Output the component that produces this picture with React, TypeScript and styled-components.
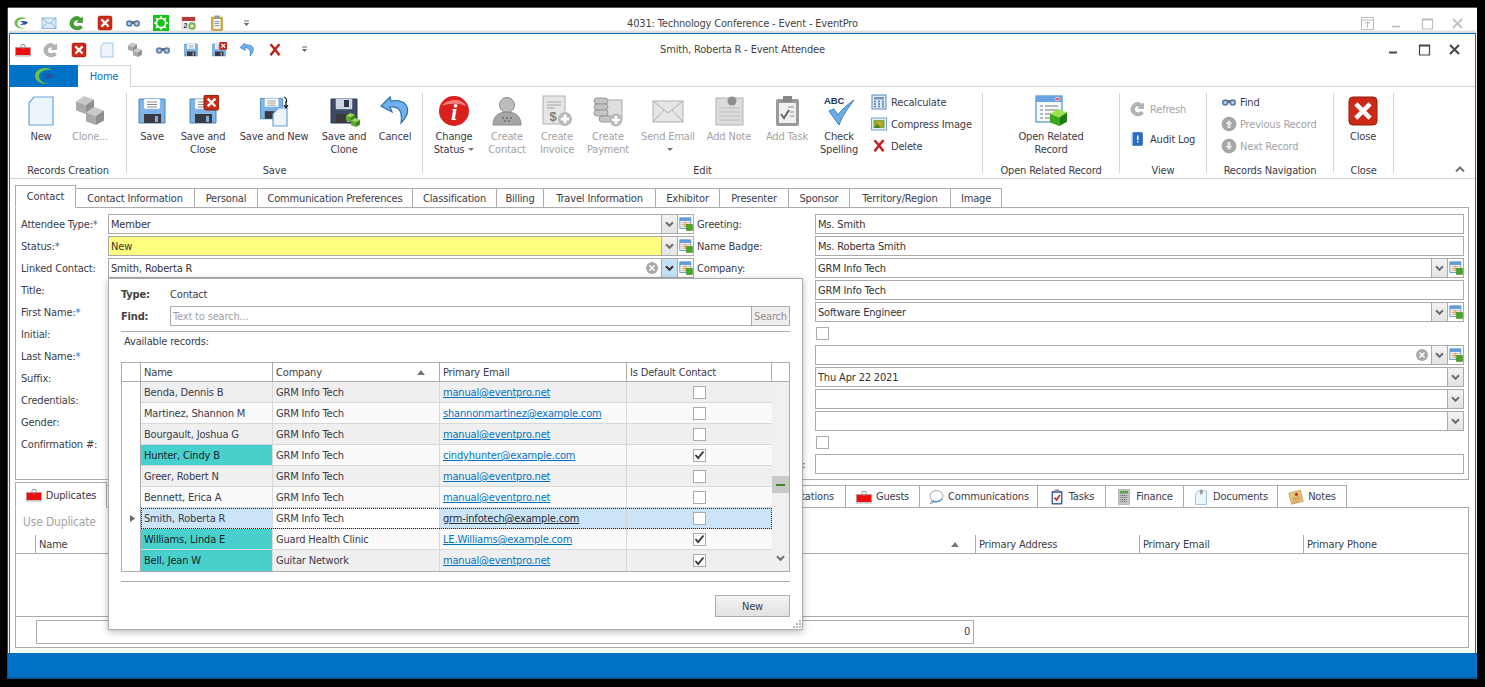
import React from "react";
import styled, { createGlobalStyle } from "styled-components";

const Global = createGlobalStyle`
  html, body { margin: 0; padding: 0; background: #000; overflow: hidden; }
  body { font-family: "DejaVu Sans", "Liberation Sans", sans-serif; font-stretch: condensed; font-size: 11px; letter-spacing: -0.17px; color: #3b3b4a; }
  * { box-sizing: border-box; }
`;

const C = { line: "#ababab", light: "#d6d6d6", blue: "#0072c6", dis: "#a3a3a3", text: "#3b3b4a" };

const Cube = ({ x, y, s, a, b, c }: { x: number; y: number; s: number; a: string; b: string; c: string }) => (
  <g>
    <polygon points={`${x},${y + s * 0.3} ${x + s * 0.45},${y} ${x + s},${y + s * 0.2} ${x + s * 0.55},${y + s * 0.5}`} fill={a} />
    <polygon points={`${x},${y + s * 0.3} ${x + s * 0.55},${y + s * 0.5} ${x + s * 0.55},${y + s} ${x},${y + s * 0.8}`} fill={b} />
    <polygon points={`${x + s * 0.55},${y + s * 0.5} ${x + s},${y + s * 0.2} ${x + s},${y + s * 0.75} ${x + s * 0.55},${y + s}`} fill={c} />
  </g>
);

const Floppy = ({ dark }: { dark?: boolean }) => (
  <g>
    <path d="M3 4h26v24H3z" fill={dark ? "#3c4a68" : "#7fb4e6"} stroke={dark ? "#2c3650" : "#4d84ba"} />
    <rect x="8" y="4" width="16" height="10" fill={dark ? "#cfd6e2" : "#fff"} stroke={dark ? "#cfd6e2" : "#9cc0e2"} strokeWidth=".5" />
    {dark ? <rect x="16" y="5" width="5" height="7" fill="#2c3650" /> : <path d="M11 7h10M11 9.5h10M11 12h10" stroke="#8a8a8a" />}
    <rect x="8" y="19" width="17" height="9" fill="#3a3a40" />
    <rect x="19" y="21" width="3" height="6" fill="#7fb0e0" />
  </g>
);

const RedBox = ({ x = 2, y = 2, s = 28 }: { x?: number; y?: number; s?: number }) => (
  <g>
    <rect x={x} y={y} width={s} height={s} rx={s * 0.14} fill="#cc2a17" stroke="#8e1c0e" strokeWidth={s > 14 ? 1 : 0.6} />
    <path d={`M${x + s * 0.3} ${y + s * 0.3}L${x + s * 0.7} ${y + s * 0.7}M${x + s * 0.7} ${y + s * 0.3}L${x + s * 0.3} ${y + s * 0.7}`} stroke="#fff" strokeWidth={s * 0.16} strokeLinecap="square" />
  </g>
);

const Doc = ({ x = 4, y = 2, w = 24, h = 28 }: { x?: number; y?: number; w?: number; h?: number }) => (
  <path d={`M${x + 5} ${y}H${x + w}V${y + h}H${x}V${y + 6}Z`} fill="#edf5fc" stroke="#6aa3d8" strokeWidth="1.2" />
);

const Plus = ({ x, y, r, c = "#b9b9b9" }: { x: number; y: number; r: number; c?: string }) => (
  <g>
    <circle cx={x} cy={y} r={r} fill={c} />
    <path d={`M${x - r * 0.6} ${y}H${x + r * 0.6}M${x} ${y - r * 0.6}V${y + r * 0.6}`} stroke="#fff" strokeWidth={r * 0.4} />
  </g>
);

const icons: Record<string, React.ReactNode> = {
  logo: (
    <g>
      <path d="M28 7C16 1 4 6 3 15c-1 9 10 14 22 12C14 27 7 21 9 14c2-5 10-8 19-7Z" fill="#6cc04a" />
      <path d="M13 14c5-3 12-2 17 1-3 5-11 6-17 3 4 0 7-1 8-2-2-2-5-2-8-2Z" fill="#2a4fa0" />
    </g>
  ),
  mail: (
    <g>
      <rect x="2" y="6" width="28" height="21" fill="#dcebf8" stroke="#6ea5d8" strokeWidth="1.5" />
      <path d="M2 6l14 12L30 6M2 27l10-12M30 27L20 15" fill="none" stroke="#6ea5d8" strokeWidth="1.5" />
    </g>
  ),
  refreshGreen: (
    <path d="M27 4v11H16l4-4c-5-3-11 0-11 6 0 6 8 9 13 4l5 4c-8 9-25 4-25-8C2 5 16-2 24 7Z" fill="#3fa52c" stroke="#1d6b16" />
  ),
  refreshGray: (
    <path d="M27 4v11H16l4-4c-5-3-11 0-11 6 0 6 8 9 13 4l5 4c-8 9-25 4-25-8C2 5 16-2 24 7Z" fill="#b5b5b5" stroke="#8f8f8f" />
  ),
  redX: <RedBox />,
  bin: (
    <g>
      <circle cx="8.5" cy="17" r="6.5" fill="#5c7ea8" />
      <circle cx="23.5" cy="17" r="6.5" fill="#5c7ea8" />
      <circle cx="8.5" cy="17" r="3.2" fill="#b8d0ea" />
      <circle cx="23.5" cy="17" r="3.2" fill="#b8d0ea" />
      <rect x="13" y="12" width="6" height="6" fill="#6d6d76" />
    </g>
  ),
  gear: (
    <g>
      <rect x="0" y="0" width="32" height="32" fill="#12c312" />
      <circle cx="16" cy="16" r="11" fill="#fff" />
      <circle cx="16" cy="16" r="7.5" fill="#12c312" />
      <path d="M16 2v5M16 25v5M2 16h5M25 16h5M6 6l4 4M22 22l4 4M26 6l-4 4M6 26l4-4" stroke="#fff" strokeWidth="3" />
    </g>
  ),
  cal: (
    <g>
      <rect x="2" y="4" width="26" height="24" fill="#f2f2f2" stroke="#b5b5b5" />
      <rect x="2" y="4" width="26" height="8" fill="#b23a3a" />
      <text x="5" y="25" fontFamily="Liberation Sans" fontWeight="700" fontSize="14" fill="#333">2</text>
      <circle cx="22" cy="22" r="7" fill="#8fbf5a" stroke="#5d8c33" />
      <circle cx="22" cy="22" r="3" fill="#eef6e2" />
    </g>
  ),
  clipYellow: (
    <g>
      <rect x="5" y="4" width="22" height="27" rx="2" fill="#d8a83a" stroke="#a77c1e" />
      <rect x="9" y="8" width="14" height="20" fill="#f2f6fb" />
      <rect x="11" y="1" width="10" height="6" fill="#8b9aa8" />
      <path d="M11 13h10M11 17h10M11 21h10" stroke="#5b85b5" strokeWidth="1.5" />
    </g>
  ),
  badge: (
    <g>
      <rect x="1" y="11" width="30" height="17" fill="#ee0e0e" stroke="#9a9a9a" />
      <rect x="12" y="5" width="8" height="7" rx="2" fill="none" stroke="#8e8e8e" strokeWidth="2" />
      <rect x="1" y="26" width="30" height="3" fill="#c9c9c9" />
    </g>
  ),
  newDoc: <Doc />,
  clone: (
    <g>
      <Cube x={2} y={1} s={18} a="#c9c9c9" b="#a9a9a9" c="#8f8f8f" />
      <Cube x={12} y={12} s={18} a="#c9c9c9" b="#a9a9a9" c="#8f8f8f" />
    </g>
  ),
  save: <Floppy />,
  saveX: (
    <g>
      <Floppy />
      <RedBox x={17} y={0} s={15} />
    </g>
  ),
  saveNew: (
    <g>
      <g transform="scale(.85)"><Floppy /></g>
      <Doc x={15} y={13} w={14} h={18} />
      <path d="M26 2c3 1 3 4 2 6M28 6v6M26 10l2 3 2-3" fill="none" stroke="#111" strokeWidth="1.2" />
    </g>
  ),
  saveClone: (
    <g>
      <Floppy dark />
      <Cube x={18} y={18} s={9} a="#9ed65c" b="#5cab2a" c="#3e8a1b" />
      <Cube x={23} y={23} s={9} a="#9ed65c" b="#5cab2a" c="#3e8a1b" />
    </g>
  ),
  undo: (
    <path d="M11 2L2 11l11 6-2-5c8-1 13 3 11 16 7-7 8-13 5-18-3-4-9-5-15-4Z" fill="#6fb1ec" stroke="#2a6db5" strokeWidth="1.2" />
  ),
  bigX: <path d="M5 6l4-3 7 8 7-8 4 3-8 9 8 10-4 3-7-9-7 9-4-3 8-10Z" fill="#c1201c" />,
  info: (
    <g>
      <circle cx="16" cy="16" r="15" fill="#d9201e" />
      <path d="M4 11c4-7 20-9 24 0-6-3-18-3-24 0Z" fill="#f47f7d" />
      <text x="16" y="25" textAnchor="middle" fontFamily="Liberation Serif" fontStyle="italic" fontWeight="700" fontSize="23" fill="#fff">i</text>
    </g>
  ),
  person: (
    <g>
      <circle cx="16" cy="10" r="7.5" fill="#bcbcbc" stroke="#8a8a8a" />
      <path d="M2 30c0-9 6-13 14-13s14 4 14 13Z" fill="#a6a6a6" stroke="#8a8a8a" />
      <path d="M11 23h2M15 23h2M19 23h2M13 26h2M17 26h2" stroke="#6d6d6d" strokeWidth="1.6" />
    </g>
  ),
  invoice: (
    <g>
      <rect x="2" y="1" width="22" height="28" fill="#e6e6e6" stroke="#b2b2b2" />
      <path d="M6 7h14M6 10h14M6 13h8" stroke="#a8a8a8" />
      <text x="12" y="26" textAnchor="middle" fontFamily="Liberation Sans" fontWeight="700" fontSize="13" fill="#7d7d7d">$</text>
      <Plus x={24} y={24} r={7} />
    </g>
  ),
  payment: (
    <g>
      <rect x="12" y="5" width="18" height="18" fill="#dedede" stroke="#aaa" />
      <rect x="2" y="3" width="14" height="6" rx="3" fill="#c4c4c4" stroke="#989898" />
      <rect x="2" y="9" width="14" height="6" rx="3" fill="#c4c4c4" stroke="#989898" />
      <rect x="2" y="15" width="14" height="6" rx="3" fill="#c4c4c4" stroke="#989898" />
      <rect x="7" y="21" width="14" height="6" rx="3" fill="#c4c4c4" stroke="#989898" />
      <Plus x={24} y={25} r={6.5} />
    </g>
  ),
  envelope: (
    <g>
      <rect x="1" y="6" width="30" height="21" fill="#e6e6e6" stroke="#b0b0b0" />
      <path d="M1 6l15 12L31 6M1 27l11-12M31 27L20 15" fill="none" stroke="#b0b0b0" />
    </g>
  ),
  note: (
    <g>
      <rect x="3" y="3" width="27" height="27" fill="#dcdcdc" stroke="#b4b4b4" />
      <path d="M6 13h21M6 17h21M6 21h21M6 25h21" stroke="#bdbdbd" />
      <circle cx="19" cy="6" r="4.5" fill="#8d8d8d" />
    </g>
  ),
  task: (
    <g>
      <rect x="5" y="4" width="23" height="27" rx="2" fill="#9a9a9a" />
      <rect x="8" y="8" width="17" height="20" fill="#f0f0f0" />
      <rect x="12" y="1" width="9" height="6" fill="#888" />
      <path d="M10 19l3 4 5-8" fill="none" stroke="#666" strokeWidth="2" />
      <path d="M17 12h6M19 17h4M19 21h4" stroke="#8a8a8a" />
    </g>
  ),
  spell: (
    <g>
      <text x="1" y="9" fontFamily="Liberation Sans" fontWeight="700" fontSize="9.5" fill="#27355c">ABC</text>
      <path d="M6 16l5-2 4 6C19 14 25 9 31 5c-5 7-11 14-15 25Z" fill="#69aee8" stroke="#3b7dc0" />
    </g>
  ),
  recalc: (
    <g>
      <rect x="2" y="2" width="28" height="28" fill="#dfeaf6" stroke="#5f87b4" strokeWidth="2" />
      <rect x="6" y="6" width="20" height="5" fill="#6f98c9" />
      <path d="M6 15h4M14 15h4M22 15h4M6 20h4M14 20h4M22 20h4M6 25h4M14 25h4M22 25h4" stroke="#4f7bb0" strokeWidth="3" />
    </g>
  ),
  compress: (
    <g>
      <rect x="1" y="4" width="30" height="24" fill="#dfeaf6" stroke="#7aa0c8" strokeWidth="2" />
      <rect x="5" y="8" width="22" height="16" fill="#7fae3f" />
      <circle cx="17" cy="15" r="5" fill="#e09a2a" />
      <path d="M5 24l8-8 6 8Z" fill="#4e7d24" />
    </g>
  ),
  related: (
    <g>
      <rect x="1" y="1" width="26" height="26" fill="#f7fafd" stroke="#4f8fd0" strokeWidth="1.2" />
      <rect x="1" y="1" width="26" height="6" fill="#69a5e2" />
      <rect x="21" y="2.5" width="3" height="3" fill="#e33" stroke="#fff" strokeWidth=".6" />
      <path d="M5 11h3M10 11h13M5 15h3M10 15h13M5 19h3M10 19h9M5 23h3M10 23h7" stroke="#777" />
      <Cube x={15} y={14} s={17} a="#9ee04c" b="#3aa71c" c="#1f7c10" />
    </g>
  ),
  audit: (
    <g>
      <rect x="5" y="3" width="20" height="26" rx="2" fill="#2a6ec4" stroke="#164e96" />
      <rect x="3" y="5" width="3" height="22" fill="#9cc3ec" />
      <rect x="14" y="9" width="3" height="9" fill="#fff" />
      <rect x="14" y="20" width="3" height="3" fill="#fff" />
    </g>
  ),
  prev: (
    <g>
      <circle cx="16" cy="16" r="14" fill="#a6a6a6" stroke="#8c8c8c" />
      <path d="M16 8l7 8h-4v8h-6v-8H9Z" fill="#e8e8e8" />
    </g>
  ),
  next: (
    <g>
      <circle cx="16" cy="16" r="14" fill="#a6a6a6" stroke="#8c8c8c" />
      <path d="M16 24l7-8h-4V8h-6v8H9Z" fill="#e8e8e8" />
    </g>
  ),
  bubble: (
    <g>
      <ellipse cx="17" cy="14" rx="13" ry="11" fill="#fff" stroke="#8a8a8a" strokeWidth="1.5" />
      <path d="M8 22L4 30l10-5" fill="#fff" stroke="#8a8a8a" strokeWidth="1.5" />
      <path d="M8 24c6 3 16 2 21-5" fill="none" stroke="#3e8ad6" strokeWidth="2.5" />
    </g>
  ),
  tasks: (
    <g>
      <rect x="5" y="4" width="22" height="27" rx="2" fill="#3f69a3" />
      <rect x="8" y="8" width="16" height="20" fill="#f6f6f6" />
      <rect x="11" y="1" width="10" height="6" fill="#8a8a8a" />
      <path d="M11 17l4 5 7-10" fill="none" stroke="#c1201c" strokeWidth="3" />
    </g>
  ),
  calc: (
    <g>
      <rect x="5" y="1" width="22" height="30" fill="#c4c4c4" stroke="#8c8c8c" />
      <rect x="8" y="4" width="16" height="5" fill="#58a34a" />
      <path d="M9 13h14M9 17h14M9 21h14M9 25h14" stroke="#666" strokeWidth="2" strokeDasharray="2 1.5" />
    </g>
  ),
  docs: (
    <g>
      <Doc x={5} y={4} w={22} h={27} />
      <path d="M16 2v9" stroke="#555" strokeWidth="2" />
      <path d="M14 4c0-3 5-3 5 0v6" fill="none" stroke="#777" />
    </g>
  ),
  notes: (
    <g transform="rotate(-14 16 16)">
      <rect x="4" y="5" width="24" height="23" fill="#e9c27a" stroke="#b17f2d" />
      <path d="M8 17h16M8 21h16M8 25h12" stroke="#9d7a3a" />
      <circle cx="18" cy="11" r="3" fill="#c1201c" />
    </g>
  ),
  table: (
    <g>
      <rect x="2" y="2" width="25" height="24" fill="#f2f7fc" stroke="#4f8ccb" strokeWidth="2" />
      <rect x="2" y="2" width="25" height="7" fill="#5f9bd8" />
      <path d="M6 13h18M6 17h18M6 21h12M14 10v14" stroke="#e2852c" strokeWidth="1.5" />
      <rect x="17" y="17" width="14" height="14" fill="#46a81f" stroke="#2d7a10" />
    </g>
  ),
};

const Icon = ({ n, s = 16 }: { n: string; s?: number }) => (
  <svg width={s} height={s} viewBox="0 0 32 32" style={{ flex: "none", display: "block" }}>
    {icons[n]}
  </svg>
);

const Chevron = ({ c = "#6f6f6f" }: { c?: string }) => (
  <svg width="9" height="7" viewBox="0 0 9 7"><path d="M1 1.2l3.5 3.6L8 1.2" fill="none" stroke={c} strokeWidth="2" /></svg>
);

const Dropper = () => (
  <svg width="7" height="7" viewBox="0 0 7 7"><path d="M1 1h5" stroke="#666" /><path d="M.8 3h5.4L3.5 6Z" fill="#666" /></svg>
);

const Frame = styled.div`
  margin: 8px 8px 0;
  width: 1469px;
  height: 671px;
  background: #fff;
  display: flex;
  flex-direction: column;
  box-shadow: 0 -1px 0 #555, -1px 0 0 #444;
`;

const OuterBar = styled.div`
  height: 25px;
  flex: none;
  display: flex;
  align-items: center;
  padding: 5px 0 0 5px;
  position: relative;
`;

const IconRow = styled.div`
  display: flex;
  align-items: center;
  gap: 12px;
`;

const QatMenu = styled.div<{ $ml: number }>`
  margin-left: ${(p) => p.$ml}px;
  display: flex;
`;

const WindowTitle = styled.div`
  position: absolute;
  left: 0;
  right: 0;
  text-align: center;
  color: #444;
  pointer-events: none;
`;

const WinButtons = styled.div<{ $mr: number }>`
  margin-left: auto;
  margin-right: ${(p) => p.$mr}px;
  display: flex;
  align-items: center;
  gap: 17px;
`;

const Inner = styled.div`
  height: 620px;
  flex: none;
  margin: 0 1px;
  border: 1px solid ${C.blue};
  border-bottom: 0;
  box-shadow: 0 -2px 2px rgba(0,0,0,.18);
  display: flex;
  flex-direction: column;
  background: #fff;
`;

const InnerBar = styled(OuterBar)`
  height: 31px;
  padding: 0 0 0 5px;
`;

const MenuTabs = styled.div`
  height: 22px;
  flex: none;
  display: flex;
  border-bottom: 1px solid ${C.light};
`;

const AppTab = styled.div`
  width: 68px;
  height: 22px;
  background: ${C.blue};
  display: flex;
  align-items: center;
  justify-content: center;
`;

const HomeTab = styled.div`
  width: 53px;
  height: 22px;
  background: #fff;
  border: 1px solid ${C.light};
  border-width: 1px 1px 0 0;
  color: ${C.blue};
  display: flex;
  align-items: center;
  justify-content: center;
`;

const Ribbon = styled.div`
  height: 92px;
  flex: none;
  display: flex;
  padding-top: 6px;
  border-bottom: 1px solid ${C.light};
`;

const Group = styled.div<{ $w: number }>`
  width: ${(p) => p.$w}px;
  height: 80px;
  flex: none;
  border-right: 1px solid ${C.light};
  display: flex;
  flex-direction: column;
`;

const GroupBody = styled.div<{ $pl?: number }>`
  height: 70px;
  flex: none;
  display: flex;
  padding-left: ${(p) => p.$pl ?? 0}px;
`;

const GroupLabel = styled.div`
  height: 14px;
  margin: 1px 0 -5px;
  line-height: 14px;
  text-align: center;
  white-space: nowrap;
`;

const BigButton = styled.div<{ $w: number; $off?: boolean }>`
  width: ${(p) => p.$w}px;
  flex: none;
  display: flex;
  flex-direction: column;
  align-items: center;
  padding-top: 2px;
  color: ${(p) => (p.$off ? C.dis : C.text)};
  line-height: 13px;
  text-align: center;
  white-space: nowrap;
`;

const BigLabel = styled.div`
  margin-top: 3px;
`;

const SmallCol = styled.div<{ $ml: number; $pt?: number; $gap?: number }>`
  margin-left: ${(p) => p.$ml}px;
  padding-top: ${(p) => p.$pt ?? 0}px;
  display: flex;
  flex-direction: column;
  gap: ${(p) => p.$gap ?? 4}px;
`;

const SmallItem = styled.div<{ $off?: boolean; $ig?: number }>`
  height: 18px;
  display: flex;
  align-items: center;
  gap: ${(p) => p.$ig ?? 4}px;
  color: ${(p) => (p.$off ? C.dis : C.text)};
  white-space: nowrap;
`;

const Caret = styled.span`
  display: inline-block;
  margin-left: 4px;
  vertical-align: 2px;
  border: 3px solid transparent;
  border-top-color: #777;
  border-bottom: 0;
`;

const CollapseBtn = styled.div`
  margin: 70px 0 0 auto;
  padding-right: 10px;
`;

const Content = styled.div`
  flex: 1;
  padding: 6px 6px 0 5px;
  display: flex;
  flex-direction: column;
  position: relative;
`;

const Strip = styled.div<{ $h: number }>`
  height: ${(p) => p.$h}px;
  flex: none;
  display: flex;
  align-items: flex-end;
  position: relative;
  z-index: 1;
  margin-bottom: -1px;
`;

const Tab = styled.div<{ $w: number; $active?: boolean; $right?: boolean; $h: number }>`
  width: ${(p) => p.$w}px;
  height: ${(p) => (p.$active ? p.$h + 1 : p.$h - 2)}px;
  flex: none;
  display: flex;
  align-items: center;
  justify-content: ${(p) => (p.$right ? "flex-end" : "center")};
  gap: 4px;
  background: #fff;
  border: 1px solid ${C.line};
  border-left-width: ${(p) => (p.$active ? 1 : 0)}px;
  border-bottom-color: ${(p) => (p.$active ? "#fff" : C.line)};
  padding: ${(p) => (p.$right ? "0 11px 0 0" : "0")};
  white-space: nowrap;
  color: ${C.text};
`;

const Panel = styled.div<{ $h: number }>`
  height: ${(p) => p.$h}px;
  flex: none;
  border: 1px solid ${C.line};
`;

const FormPanel = styled(Panel)`
  padding: 6px 0 0 5px;
  display: flex;
  gap: 3px;
`;

const FormCol = styled.div`
  display: flex;
  flex-direction: column;
`;

const Row = styled.div<{ $h?: number; $lw: number; $cw: number }>`
  height: ${(p) => p.$h ?? 22}px;
  display: grid;
  grid-template-columns: ${(p) => p.$lw}px ${(p) => p.$cw}px;
  align-items: start;
`;

const Label = styled.div`
  height: 20px;
  line-height: 21px;
  white-space: nowrap;
`;

const Star = styled.span`
  color: #2f6fb0;
`;

const Control = styled.div`
  height: 20px;
  display: flex;
  border: 1px solid ${C.line};
  background: #fff;
`;

const ControlText = styled.div<{ $bg?: string }>`
  flex: 1;
  min-width: 0;
  padding: 1px 2px 0;
  line-height: 17px;
  background: ${(p) => p.$bg ?? "#fff"};
  display: flex;
  align-items: center;
  justify-content: space-between;
  white-space: nowrap;
  color: #333;
`;

const ClearMark = styled.div`
  width: 14px;
  height: 14px;
  display: flex;
  margin-top: -1px;
`;

const DropBtn = styled.div<{ $on?: boolean }>`
  width: 16px;
  height: 18px;
  flex: none;
  display: flex;
  align-items: center;
  justify-content: center;
  border-left: 1px solid ${C.line};
  background: ${(p) => (p.$on ? "#c6e1f6" : "linear-gradient(#f3f3f3,#e3e3e3)")};
`;

const SideBtn = styled.div`
  width: 16px;
  height: 18px;
  flex: none;
  display: flex;
  align-items: center;
  justify-content: center;
  border-left: 1px solid ${C.line};
`;

const CheckBox = styled.div`
  width: 13px;
  height: 13px;
  border: 1px solid ${C.line};
  background: #fff;
  display: flex;
  align-items: center;
  justify-content: center;
`;

const CheckRow = styled.div`
  height: 19px;
  display: flex;
  align-items: center;
  padding: 0 0 0 1px;
`;

const GapV = styled.div<{ $h: number }>`
  height: ${(p) => p.$h}px;
  flex: none;
`;

const BottomPanel = styled(Panel)`
  display: flex;
  flex-direction: column;
`;

const UseDup = styled.div`
  height: 27px;
  padding: 7px 0 0 7px;
  font-size: 12px;
  color: ${C.dis};
`;

const DupHead = styled.div`
  height: 19px;
  flex: none;
  display: flex;
  align-items: stretch;
  border-bottom: 1px solid ${C.line};
  padding-left: 19px;
`;

const DupCol = styled.div<{ $w: number }>`
  width: ${(p) => p.$w}px;
  flex: none;
  border-left: 1px solid ${C.line};
  padding: 1px 0 0 3px;
  line-height: 17px;
  display: flex;
  align-items: center;
  justify-content: space-between;
`;

const DupBody = styled.div`
  flex: 1;
`;

const DupFoot = styled.div`
  height: 31px;
  flex: none;
  border-top: 1px solid ${C.line};
  padding: 3px 0 0 20px;
`;

const FootBox = styled.div`
  width: 938px;
  height: 24px;
  border: 1px solid ${C.line};
  text-align: right;
  padding-right: 3px;
  line-height: 22px;
`;

const Popup = styled.div`
  position: absolute;
  left: 98px;
  top: 99px;
  width: 695px;
  height: 352px;
  z-index: 5;
  background: #fff;
  border: 1px solid ${C.line};
  box-shadow: 0 2px 7px rgba(0,0,0,.28);
  padding: 4px 12px 0 12px;
  display: flex;
  flex-direction: column;
`;

const PopRow = styled.div`
  height: 22px;
  flex: none;
  display: grid;
  grid-template-columns: 49px 1fr;
  align-items: center;
`;

const PopLabel = styled.div`
  font-weight: 700;
  color: #444;
`;

const SearchBox = styled.div`
  height: 20px;
  width: 620px;
  border: 1px solid ${C.line};
  display: flex;
  justify-content: space-between;
  align-items: stretch;
  color: #a0a0a0;
  line-height: 19px;
  padding-left: 2px;
`;

const SearchBtn = styled.div`
  width: 38px;
  flex: none;
  border-left: 1px solid ${C.line};
  background: #efefef;
  color: #8f8f8f;
  text-align: center;
`;

const Sep = styled.div<{ $mt?: number }>`
  height: 1px;
  width: 669px;
  flex: none;
  margin-top: ${(p) => p.$mt ?? 0}px;
  background: ${C.line};
`;

const Avail = styled.div`
  height: 30px;
  flex: none;
  padding: 3px 0 0 3px;
  line-height: 14px;
`;

const GridBox = styled.div`
  width: 669px;
  height: 210px;
  flex: none;
  border: 1px solid ${C.line};
  display: flex;
  flex-direction: column;
`;

const COLS = "19px 132px 167px 187px 145px 17px";

const GridHead = styled.div`
  height: 19px;
  flex: none;
  display: grid;
  grid-template-columns: ${COLS};
  border-bottom: 1px solid ${C.line};
`;

const HeadCell = styled.div`
  border-right: 1px solid ${C.line};
  padding: 1px 3px 0;
  line-height: 17px;
  display: flex;
  align-items: center;
  justify-content: space-between;
  &:last-child { border-right: 0; }
`;

const SortUp = styled.span<{ $mr: number }>`
  width: 0;
  height: 0;
  margin-right: ${(p) => p.$mr}px;
  border: 4px solid transparent;
  border-top: 0;
  border-bottom: 5px solid #777;
`;

const GridBody = styled.div`
  flex: 1;
  display: grid;
  grid-template-columns: 19px 631px 17px;
  min-height: 0;
`;

const Indicator = styled.div`
  display: flex;
  flex-direction: column;
  border-right: 1px solid ${C.line};
`;

const IndCell = styled.div`
  height: 21px;
  display: flex;
  align-items: center;
  padding: 0 0 0 8px;
`;

const Rows = styled.div`
  display: flex;
  flex-direction: column;
`;

const GridRow = styled.div<{ $alt: boolean; $sel?: boolean }>`
  height: 21px;
  flex: none;
  display: grid;
  grid-template-columns: 132px 167px 187px 145px;
  background: ${(p) => (p.$sel ? "#fff" : p.$alt ? "#efefef" : "#fafafa")};
  border-bottom: 1px solid #d8d8d8;
  outline: ${(p) => (p.$sel ? "1px dotted #222" : "none")};
  outline-offset: -1px;
  &:last-child { border-bottom: 0; }
`;

const Cell = styled.div<{ $bg?: string; $dark?: boolean }>`
  padding: 1px 3px 0;
  line-height: 20px;
  white-space: nowrap;
  overflow: hidden;
  border-right: 1px solid #d8d8d8;
  background: ${(p) => p.$bg ?? "transparent"};
  color: ${(p) => (p.$dark ? "#1c1c28" : C.text)};
`;

const MailLink = styled.span<{ $sel?: boolean }>`
  color: ${(p) => (p.$sel ? "#2a2a33" : "#0072c6")};
  text-decoration: underline;
`;

const CheckCell = styled.div<{ $bg?: string }>`
  display: flex;
  align-items: center;
  justify-content: center;
  background: ${(p) => p.$bg ?? "transparent"};
`;

const Scroll = styled.div`
  display: flex;
  flex-direction: column;
  align-items: center;
  background: #f0f0f0;
`;

const Thumb = styled.div`
  width: 17px;
  height: 17px;
  margin-top: 94px;
  background: #c9c9c9;
  display: flex;
  align-items: center;
  justify-content: center;
`;

const ThumbMark = styled.div`
  width: 9px;
  height: 2px;
  background: #3b8a24;
`;

const ScrollDown = styled.div`
  margin-top: auto;
  padding-bottom: 6px;
`;

const PopFoot = styled.div`
  display: flex;
  justify-content: flex-end;
  padding-top: 13px;
  width: 669px;
`;

const NewBtn = styled.div`
  width: 75px;
  height: 22px;
  border: 1px solid ${C.line};
  background: linear-gradient(#f3f3f3,#e2e2e2);
  text-align: center;
  line-height: 21px;
`;

const Grip = styled.svg`
  position: absolute;
  right: 1px;
  bottom: 1px;
`;

const Status = styled.div`
  flex: 1;
  background: ${C.blue};
  border-bottom: 2px solid #005a9e;
`;

const formTabs: [string, number][] = [
  ["Contact", 61], ["Contact Information", 119], ["Personal", 63], ["Communication Preferences", 155],
  ["Classification", 84], ["Billing", 47], ["Travel Information", 112], ["Exhibitor", 64],
  ["Presenter", 69], ["Sponsor", 61], ["Territory/Region", 101], ["Image", 51],
];

const bottomTabs: [string, number, string?][] = [
  ["Duplicates", 92, "badge"], ["Presentations", 739], ["Guests", 74, "badge"], ["Communications", 118, "bubble"],
  ["Tasks", 68, "tasks"], ["Finance", 78, "calc"], ["Documents", 94, "docs"], ["Notes", 69, "notes"],
];

type L = { t: string; star?: boolean; kind?: string };
const leftRows: L[] = [
  { t: "Attendee Type:", star: true, kind: "Member" },
  { t: "Status:", star: true, kind: "New" },
  { t: "Linked Contact:", kind: "Smith, Roberta R" },
  { t: "Title:" }, { t: "First Name:", star: true }, { t: "Initial:" }, { t: "Last Name:", star: true },
  { t: "Suffix:" }, { t: "Credentials:" }, { t: "Gender:" }, { t: "Confirmation #:" },
];

const records = [
  ["Benda, Dennis B", "GRM Info Tech", "manual@eventpro.net", 0, 0],
  ["Martinez, Shannon M", "GRM Info Tech", "shannonmartinez@example.com", 0, 0],
  ["Bourgault, Joshua G", "GRM Info Tech", "manual@eventpro.net", 0, 0],
  ["Hunter, Cindy B", "GRM Info Tech", "cindyhunter@example.com", 1, 1],
  ["Greer, Robert N", "GRM Info Tech", "manual@eventpro.net", 0, 0],
  ["Bennett, Erica A", "GRM Info Tech", "manual@eventpro.net", 0, 0],
  ["Smith, Roberta R", "GRM Info Tech", "grm-infotech@example.com", 0, 0],
  ["Williams, Linda E", "Guard Health Clinic", "LE.Williams@example.com", 1, 1],
  ["Bell, Jean W", "Guitar Network", "manual@eventpro.net", 1, 1],
] as const;

const Tick = () => (
  <svg width="11" height="10" viewBox="0 0 11 10"><path d="M1.5 5l2.6 3L9.5 1.5" fill="none" stroke="#333" strokeWidth="1.8" /></svg>
);

const Clear = () => (
  <ClearMark>
    <svg width="14" height="14" viewBox="0 0 14 14">
      <circle cx="7" cy="7" r="6" fill="#a9a9a9" />
      <path d="M4.5 4.5l5 5M9.5 4.5l-5 5" stroke="#fff" strokeWidth="1.5" />
    </svg>
  </ClearMark>
);

const Side = () => (
  <SideBtn><Icon n="table" s={14} /></SideBtn>
);

const WinGlyph = ({ k, c }: { k: string; c: string }) => (
  <svg width="13" height="13" viewBox="0 0 13 13">
    {k === "pin" && <path d="M.5.5h12v12H.5zM.5 3h12M6.5 11V5M4 7l2.5-2.5L9 7" fill="none" stroke={c} />}
    {k === "min" && <path d="M1 9.5h8" stroke={c} strokeWidth="2" />}
    {k === "max" && <path d="M1.5 2h10v10h-10zM1.5 3h10" fill="none" stroke={c} strokeWidth="1.2" />}
    {k === "close" && <path d="M2 2l9 9M11 2l-9 9" stroke={c} strokeWidth="2" />}
  </svg>
);

const Big = ({ n, w, label, off, caret }: { n: string; w: number; label: React.ReactNode; off?: boolean; caret?: boolean }) => (
  <BigButton $w={w} $off={off}>
    <Icon n={n} s={32} />
    <BigLabel>{label}{caret && <Caret />}</BigLabel>
  </BigButton>
);

export default function App() {
  return (
    <>
      <Global />
      <Frame>
        <OuterBar>
          <IconRow>
            {["logo", "mail", "refreshGreen", "redX", "bin", "gear", "cal", "clipYellow"].map((n, i) => <Icon key={i} n={n} />)}
          </IconRow>
          <QatMenu $ml={18}><Dropper /></QatMenu>
          <WindowTitle>4031: Technology Conference - Event - EventPro</WindowTitle>
          <WinButtons $mr={13}>
            <WinGlyph k="pin" c="#bdbdbd" /><WinGlyph k="min" c="#c4c4c4" /><WinGlyph k="max" c="#bdbdbd" /><WinGlyph k="close" c="#c4c4c4" />
          </WinButtons>
        </OuterBar>
        <Inner>
          <InnerBar>
            <IconRow>
              {["badge", "refreshGray", "redX", "newDoc", "clone", "bin", "save", "saveX", "undo", "bigX"].map((n, i) => <Icon key={i} n={n} />)}
            </IconRow>
            <QatMenu $ml={18}><Dropper /></QatMenu>
            <WindowTitle>Smith, Roberta R - Event Attendee</WindowTitle>
            <WinButtons $mr={14}>
              <WinGlyph k="min" c="#444" /><WinGlyph k="max" c="#444" /><WinGlyph k="close" c="#444" />
            </WinButtons>
          </InnerBar>
          <MenuTabs>
            <AppTab><Icon n="logo" s={22} /></AppTab>
            <HomeTab>Home</HomeTab>
          </MenuTabs>
          <Ribbon>
            <Group $w={117}>
              <GroupBody $pl={12}>
                <Big n="newDoc" w={38} label="New" />
                <Big n="clone" w={60} label="Clone..." off />
              </GroupBody>
              <GroupLabel>Records Creation</GroupLabel>
            </Group>
            <Group $w={296}>
              <GroupBody>
                <Big n="save" w={50} label="Save" />
                <Big n="saveX" w={52} label={<>Save and<br />Close</>} />
                <Big n="saveNew" w={90} label="Save and New" />
                <Big n="saveClone" w={50} label={<>Save and<br />Clone</>} />
                <Big n="undo" w={52} label="Cancel" />
              </GroupBody>
              <GroupLabel>Save</GroupLabel>
            </Group>
            <Group $w={560}>
              <GroupBody>
                <Big n="info" w={62} label={<>Change<br />Status</>} caret />
                <Big n="person" w={44} label={<>Create<br />Contact</>} off />
                <Big n="invoice" w={56} label={<>Create<br />Invoice</>} off />
                <Big n="payment" w={46} label={<>Create<br />Payment</>} off />
                <Big n="envelope" w={74} label={<>Send Email<br /><Caret /></>} off />
                <Big n="note" w={48} label="Add Note" off />
                <Big n="task" w={68} label="Add Task" off />
                <Big n="spell" w={36} label={<>Check<br />Spelling</>} />
                <SmallCol $ml={14}>
                  <SmallItem><Icon n="recalc" />Recalculate</SmallItem>
                  <SmallItem><Icon n="compress" />Compress Image</SmallItem>
                  <SmallItem><Icon n="bigX" />Delete</SmallItem>
                </SmallCol>
              </GroupBody>
              <GroupLabel>Edit</GroupLabel>
            </Group>
            <Group $w={137}>
              <GroupBody>
                <Big n="related" w={136} label={<>Open Related<br />Record</>} />
              </GroupBody>
              <GroupLabel>Open Related Record</GroupLabel>
            </Group>
            <Group $w={87}>
              <GroupBody $pl={10}>
                <SmallCol $ml={0} $pt={7} $gap={12}>
                  <SmallItem $off><Icon n="refreshGray" />Refresh</SmallItem>
                  <SmallItem><Icon n="audit" />Audit Log</SmallItem>
                </SmallCol>
              </GroupBody>
              <GroupLabel>View</GroupLabel>
            </Group>
            <Group $w={127}>
              <GroupBody $pl={14}>
                <SmallCol $ml={0}>
                  <SmallItem $ig={3}><Icon n="bin" />Find</SmallItem>
                  <SmallItem $off $ig={3}><Icon n="prev" />Previous Record</SmallItem>
                  <SmallItem $off $ig={3}><Icon n="next" />Next Record</SmallItem>
                </SmallCol>
              </GroupBody>
              <GroupLabel>Records Navigation</GroupLabel>
            </Group>
            <Group $w={60}>
              <GroupBody>
                <Big n="redX" w={58} label="Close" />
              </GroupBody>
              <GroupLabel>Close</GroupLabel>
            </Group>
            <CollapseBtn>
              <svg width="10" height="7" viewBox="0 0 10 7"><path d="M1 5.5l4-4 4 4" fill="none" stroke="#777" strokeWidth="2" /></svg>
            </CollapseBtn>
          </Ribbon>
          <Content>
            <Strip $h={23}>
              {formTabs.map(([t, w], i) => (
                <Tab key={t} $w={w} $h={22} $active={i === 0}>{t}</Tab>
              ))}
            </Strip>
            <FormPanel $h={273}>
              <FormCol>
                {leftRows.map((r) => (
                  <Row key={r.t} $lw={87} $cw={586}>
                    <Label>{r.t}{r.star && <Star>*</Star>}</Label>
                    <Control>
                      <ControlText $bg={r.kind === "New" ? "#ffff80" : undefined}>
                        {r.kind}
                        {r.kind === "Smith, Roberta R" && <Clear />}
                      </ControlText>
                      <DropBtn $on={r.kind === "Smith, Roberta R"}><Chevron c={r.kind === "Smith, Roberta R" ? "#333" : undefined} /></DropBtn>
                      <Side />
                    </Control>
                  </Row>
                ))}
              </FormCol>
              <FormCol>
                <Row $lw={118} $cw={649}>
                  <Label>Greeting:</Label>
                  <Control><ControlText>Ms. Smith</ControlText></Control>
                </Row>
                <Row $lw={118} $cw={649}>
                  <Label>Name Badge:</Label>
                  <Control><ControlText>Ms. Roberta Smith</ControlText></Control>
                </Row>
                <Row $lw={118} $cw={649}>
                  <Label>Company:</Label>
                  <Control>
                    <ControlText>GRM Info Tech</ControlText>
                    <DropBtn><Chevron /></DropBtn>
                    <Side />
                  </Control>
                </Row>
                <Row $lw={118} $cw={649}>
                  <Label />
                  <Control><ControlText>GRM Info Tech</ControlText></Control>
                </Row>
                <Row $lw={118} $cw={649}>
                  <Label>Job Title:</Label>
                  <Control>
                    <ControlText>Software Engineer</ControlText>
                    <DropBtn><Chevron /></DropBtn>
                    <Side />
                  </Control>
                </Row>
                <Row $lw={118} $cw={649} $h={21}>
                  <Label />
                  <CheckRow><CheckBox /></CheckRow>
                </Row>
                <Row $lw={118} $cw={649}>
                  <Label />
                  <Control>
                    <ControlText><span /><Clear /></ControlText>
                    <DropBtn><Chevron /></DropBtn>
                    <Side />
                  </Control>
                </Row>
                <Row $lw={118} $cw={649}>
                  <Label />
                  <Control>
                    <ControlText>Thu Apr 22 2021</ControlText>
                    <DropBtn><Chevron /></DropBtn>
                  </Control>
                </Row>
                <Row $lw={118} $cw={649}>
                  <Label />
                  <Control><ControlText /><DropBtn><Chevron /></DropBtn></Control>
                </Row>
                <Row $lw={118} $cw={649}>
                  <Label />
                  <Control><ControlText /><DropBtn><Chevron /></DropBtn></Control>
                </Row>
                <Row $lw={118} $cw={649} $h={21}>
                  <Label />
                  <CheckRow><CheckBox /></CheckRow>
                </Row>
                <Row $lw={118} $cw={649}>
                  <Label>Notes on Cancellation:</Label>
                  <Control><ControlText /></Control>
                </Row>
              </FormCol>
            </FormPanel>
            <GapV $h={3} />
            <Strip $h={25}>
              {bottomTabs.map(([t, w, ic], i) => (
                <Tab key={t} $w={w} $h={25} $active={i === 0} $right={i === 1}>
                  {ic && <Icon n={ic} s={16} />}
                  {t}
                </Tab>
              ))}
            </Strip>
            <BottomPanel $h={141}>
              <UseDup>Use Duplicate</UseDup>
              <DupHead>
                <DupCol $w={940}>Name<SortUp $mr={16} /></DupCol>
                <DupCol $w={164}>Primary Address</DupCol>
                <DupCol $w={164}>Primary Email</DupCol>
                <DupCol $w={165}>Primary Phone</DupCol>
              </DupHead>
              <DupBody />
              <DupFoot><FootBox>0</FootBox></DupFoot>
            </BottomPanel>
            <Popup>
              <PopRow><PopLabel>Type:</PopLabel><span>Contact</span></PopRow>
              <PopRow>
                <PopLabel>Find:</PopLabel>
                <SearchBox>Text to search...<SearchBtn>Search</SearchBtn></SearchBox>
              </PopRow>
              <Sep $mt={4} />
              <Avail>Available records:</Avail>
              <GridBox>
                <GridHead>
                  <HeadCell />
                  <HeadCell>Name</HeadCell>
                  <HeadCell>Company<SortUp $mr={11} /></HeadCell>
                  <HeadCell>Primary Email</HeadCell>
                  <HeadCell>Is Default Contact</HeadCell>
                  <HeadCell />
                </GridHead>
                <GridBody>
                  <Indicator>
                    {records.map((r, i) => (
                      <IndCell key={r[0]}>
                        {i === 6 && <svg width="5" height="7" viewBox="0 0 5 7"><path d="M0 0l5 3.5L0 7Z" fill="#666" /></svg>}
                      </IndCell>
                    ))}
                  </Indicator>
                  <Rows>
                    {records.map((r, i) => {
                      const sel = i === 6;
                      const selBg = sel ? "#cce4f7" : undefined;
                      return (
                        <GridRow key={r[0]} $alt={i % 2 === 0} $sel={sel}>
                          <Cell $bg={r[3] ? "#48d1cc" : selBg} $dark={!!r[3]}>{r[0]}</Cell>
                          <Cell>{r[1]}</Cell>
                          <Cell $bg={selBg}><MailLink $sel={sel}>{r[2]}</MailLink></Cell>
                          <CheckCell $bg={selBg}><CheckBox>{r[4] ? <Tick /> : null}</CheckBox></CheckCell>
                        </GridRow>
                      );
                    })}
                  </Rows>
                  <Scroll>
                    <Thumb><ThumbMark /></Thumb>
                    <ScrollDown><Chevron /></ScrollDown>
                  </Scroll>
                </GridBody>
              </GridBox>
              <GapV $h={9} />
              <Sep />
              <PopFoot><NewBtn>New</NewBtn></PopFoot>
              <Grip width="9" height="9" viewBox="0 0 9 9">
                <path d="M7 1h2v2H7zM4 4h2v2H4zM7 4h2v2H7zM1 7h2v2H1zM4 7h2v2H4zM7 7h2v2H7z" fill="#b8b8b8" />
              </Grip>
            </Popup>
          </Content>
        </Inner>
        <Status />
      </Frame>
    </>
  );
}
